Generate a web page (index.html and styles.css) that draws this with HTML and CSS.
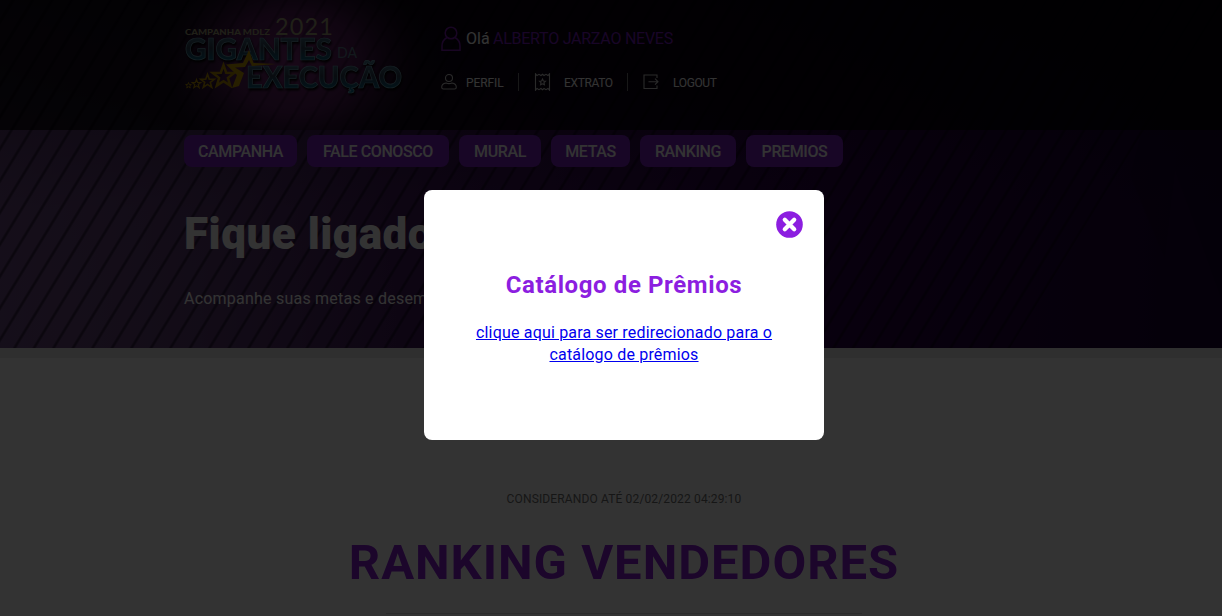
FILE: index.html
```html
<!DOCTYPE html>
<html lang="pt-BR">
<head>
<meta charset="utf-8">
<title>Gigantes da Execução</title>
<link rel="stylesheet" href="styles.css">
</head>
<body>
<div class="page">
  <div class="top">
    <svg class="backdrop" width="1248" height="348" viewBox="0 0 1248 348">
      <defs>
        <linearGradient id="base" x1="0" y1="0" x2="1" y2="0">
          <stop offset="0" stop-color="#64427c"/>
          <stop offset=".16" stop-color="#54346c"/>
          <stop offset=".36" stop-color="#3f1658"/>
          <stop offset=".6" stop-color="#30054a"/>
          <stop offset=".88" stop-color="#20003a"/>
          <stop offset="1" stop-color="#180030"/>
        </linearGradient>
        <radialGradient id="light" gradientUnits="userSpaceOnUse" cx="70" cy="330" r="330">
          <stop offset="0" stop-color="#8a6a96" stop-opacity=".25"/>
          <stop offset="1" stop-color="#8a6a96" stop-opacity="0"/>
        </radialGradient>
        <linearGradient id="shade" x1="0" y1="0" x2="0" y2="1">
          <stop offset="0" stop-color="#0a0018" stop-opacity=".4"/>
          <stop offset=".6" stop-color="#0a0018" stop-opacity="0"/>
        </linearGradient>
        <radialGradient id="glow" gradientUnits="userSpaceOnUse" cx="293" cy="62" r="130" gradientTransform="translate(0 14) scale(1 .77)">
          <stop offset="0" stop-color="#96358f" stop-opacity=".8"/>
          <stop offset=".5" stop-color="#7c2a80" stop-opacity=".6"/>
          <stop offset="1" stop-color="#4a1650" stop-opacity="0"/>
        </radialGradient>
        <pattern id="stripes" width="19.5" height="400" patternUnits="userSpaceOnUse" patternTransform="translate(1009 348) skewX(-31.5)">
          <rect width="1.500" height="400" fill="#06000e"/>
          <rect x="18" width="1.500" height="400" fill="#06000e"/>
        </pattern>
      </defs>
      <rect width="1248" height="348" fill="url(#base)"/>
      <rect width="1248" height="348" fill="url(#light)"/>
      <rect width="1248" height="348" fill="url(#shade)"/>
      <path d="M1222 300 1175 170 1165 260 1130 175 1142 130 1222 130Z" fill="#0a0016" opacity=".15"/>
      <path d="M0 0H1224L1010 348H0Z" fill="url(#stripes)" opacity=".48"/>
      <rect width="1248" height="130" fill="#000" opacity=".7"/>
      <rect x="140" width="310" height="130" fill="url(#glow)"/>
      <path d="M0 0H1224L1144 130H0Z" fill="url(#stripes)" opacity=".22"/>
    </svg>
    <div class="content">
      <header class="header">
        <svg class="logo" width="230" height="100" viewBox="180 5 230 100" role="img" aria-label="Gigantes da Execução">
          <defs>
            <linearGradient id="metal" x1="0" y1="0" x2="0" y2="1">
              <stop offset="0" stop-color="#4a8296"/>
              <stop offset=".5" stop-color="#2c3c50"/>
              <stop offset="1" stop-color="#007498"/>
            </linearGradient>
            <path id="star" d="M0-10 2.4-3.3 9.5-3.1 3.9 1.2 5.9 8.1 0 4.1-5.9 8.1-3.9 1.2-9.5-3.1-2.4-3.3Z"/>
          </defs>
          <g class="logo-small">
            <text x="185" y="35" font-size="8" font-weight="900" textLength="85" lengthAdjust="spacingAndGlyphs">CAMPANHA MDLZ</text>
            <text x="275" y="35" font-size="23.500" font-weight="400" textLength="58" lengthAdjust="spacing">2021</text>
          </g>
          <g class="logo-metal">
            <text x="185" y="60" font-size="30" textLength="147" lengthAdjust="spacingAndGlyphs">GIGANTES</text>
            <text x="246" y="88" font-size="30" textLength="156" lengthAdjust="spacingAndGlyphs">EXECUÇÃO</text>
          </g>
          <text class="logo-da" x="337" y="58" font-size="16" textLength="20" lengthAdjust="spacingAndGlyphs">DA</text>
          <g class="stars">
            <use href="#star" transform="translate(188.500 85.500) scale(.3)" stroke-width="3"/>
            <use href="#star" transform="translate(196.500 84) scale(.45)" stroke-width="2.600"/>
            <use href="#star" transform="translate(207.500 81.500) scale(.72)" stroke-width="2.200"/>
            <use href="#star" transform="translate(223.500 76.500) scale(1.130)" stroke-width="2.200"/>
          </g>
          <path d="M249 50 253.500 63 276 64 252 66 249 60 245 67 235 67.500 244 73 239 86 232 88 237 75 226 64.500 243 63Z" fill="#c49a00"/>
        </svg>
        <div class="account">
          <div class="hello">
            <svg width="20" height="26" viewBox="0 0 20 26" fill="none" stroke="#7a1ab0" stroke-width="1.500"><circle cx="10" cy="7" r="5.800"/><path d="M6 11.500C2.500 13.500 1 16 1 20V24.200H19V20C19 16 17.500 13.500 14 11.500"/></svg>
            <span class="hi">Olá</span><span class="name">ALBERTO JARZAO NEVES</span>
          </div>
          <div class="links">
            <a class="link perfil"><svg width="16" height="18" viewBox="0 0 16 18"><circle cx="8" cy="5" r="3.500"/><path d="M5 10C2 10.500 .7 12.500 .7 14.200Q.7 16 2.500 16H13.500Q15.300 16 15.300 14.200C15.300 12.500 14 10.500 11 10Q8 11.300 5 10Z"/></svg><span>PERFIL</span></a>
            <a class="link extrato"><svg width="17" height="18" viewBox="0 0 17 18"><path d="M1.500 .8 3 2.500 5 1.300 7 2.500 8.500 1.300 10 2.500 12 1.300 14 2.500 15.500 .8V17.200L14 15.500 12 16.700 10 15.500 8.500 16.700 7 15.500 5 16.700 3 15.500 1.500 17.200Z"/><path d="M8.500 6 9.400 8 11.500 8.200 10 9.700 10.400 11.800 8.500 10.800 6.600 11.800 7 9.700 5.500 8.200 7.600 8Z"/></svg><span>EXTRATO</span></a>
            <a class="link logout"><svg width="16" height="18" viewBox="0 0 16 18"><path d="M14 5V2H1V15.500H14V12.500M5.500 8.700H15M12 5.700 15 8.700 12 11.700"/></svg><span>LOGOUT</span></a>
          </div>
        </div>
      </header>
      <nav class="menu">
        <a class="w113">CAMPANHA</a><a class="w142">FALE CONOSCO</a><a class="w82">MURAL</a><a class="w79">METAS</a><a class="w96">RANKING</a><a class="w97">PREMIOS</a>
      </nav>
      <h1>Fique ligado</h1>
      <p class="intro">Acompanhe suas metas e desempenho</p>
    </div>
  </div>
  <main class="ranking">
    <p class="date">CONSIDERANDO ATÉ 02/02/2022 04:29:10</p>
    <h2>RANKING VENDEDORES</h2>
    <div class="rule"></div>
  </main>
  <div class="overlay">
    <div class="modal">
      <svg class="close" width="27" height="27" viewBox="0 0 27 27"><circle cx="13.500" cy="13.500" r="13.300" fill="#8c1ee0"/><path d="M8.800 8.800 18.200 18.200M18.200 8.800 8.800 18.200" stroke="#fff" stroke-width="4.300" stroke-linecap="round"/></svg>
      <h3>Catálogo de Prêmios</h3>
      <a class="go" href="#">clique aqui para ser redirecionado para o<br>catálogo de prêmios</a>
    </div>
  </div>
</div>
</body>
</html>
```

FILE: styles.css
```css
html { overflow: hidden; }
body { margin: 0; overflow: hidden; font-family: Roboto, "Liberation Sans", sans-serif; }
h1, h2, h3, p { margin: 0; }
.page { position: relative; width: 1248px; height: 616px; overflow: hidden; background: #fff; }

.top { display: grid; height: 348px; }
.backdrop, .content { grid-area: 1 / 1; }
.content { z-index: 1; padding-left: 184px; }
.header { display: flex; height: 130px; }
.logo { margin: 5px 26px 0 -4px; overflow: visible; }
.logo text { font-family: Lato, sans-serif; }
.logo-small { fill: #a0a078; }
.logo-metal { font-weight: 900; fill: url(#metal); stroke: #6f9fb0; stroke-width: .7; filter: drop-shadow(1px 2px 1px #000); }
.logo-da { fill: #5c7c8e; }
.stars { fill: none; stroke: #b48e00; }

.account { padding: 26px 0 0 5px; color: #fff; }
.hello { display: flex; height: 26px; line-height: 26px; font-size: 16px; }
.hi { margin-left: 5px; width: 27px; }
.name { color: #7a1cc0; letter-spacing: -.25px; }
.links { display: flex; align-items: center; margin-top: 21px; height: 18px; font-size: 12px; letter-spacing: -.35px; }
.link { display: flex; align-items: center; height: 18px; box-sizing: border-box; }
.link svg { fill: none; stroke: #d0d0d0; stroke-width: 1.1; }
.link span { padding-top: 2px; }
.perfil { width: 78px; border-right: 1px solid #777; gap: 9px; letter-spacing: -.1px; }
.extrato { width: 109px; padding-left: 15px; border-right: 1px solid #777; gap: 13px; }
.logout { padding-left: 15px; gap: 14px; }

.menu { display: flex; gap: 10px; padding-top: 5px; }
.menu a { height: 32px; border-radius: 8px; background: #7820bf; color: #fff; font-size: 16px; font-weight: 500; letter-spacing: -.4px; line-height: 33px; text-align: center; }
.w113 { width: 113px; }
.w142 { width: 142px; }
.w82 { width: 82px; }
.w79 { width: 79px; }
.w96 { width: 96px; }
.w97 { width: 97px; }
h1 { margin-top: 40px; height: 54px; line-height: 54px; font-size: 44px; font-weight: 900; letter-spacing: .5px; color: #fff; white-space: nowrap; }
.intro { margin-top: 27px; font-size: 16px; line-height: 22px; letter-spacing: .22px; color: #fff; }

.ranking { border-top: 10px solid #ebebeb; text-align: center; }
.date { margin-top: 133px; font-size: 12px; line-height: 16px; letter-spacing: .14px; color: #707070; }
h2 { margin-top: 27px; font-size: 49px; line-height: 58px; font-weight: 700; letter-spacing: .98px; color: #8c20d8; }
.rule { margin: 21px auto 0; width: 476px; height: 1px; background: #dcdcdc; }

.overlay { position: absolute; inset: 0; z-index: 2; background: rgba(0, 0, 0, .8); }
.modal { box-sizing: border-box; margin: 190px auto 0; width: 400px; height: 250px; padding: 21px; border-radius: 8px; background: #fff; text-align: center; }
.close { display: block; margin-left: auto; }
h3 { margin-top: 32px; font-size: 24px; line-height: 30px; letter-spacing: .6px; color: #8c1ee0; }
.go { display: block; margin-top: 22px; font-size: 16px; line-height: 22px; letter-spacing: .18px; color: #00e; }
```
